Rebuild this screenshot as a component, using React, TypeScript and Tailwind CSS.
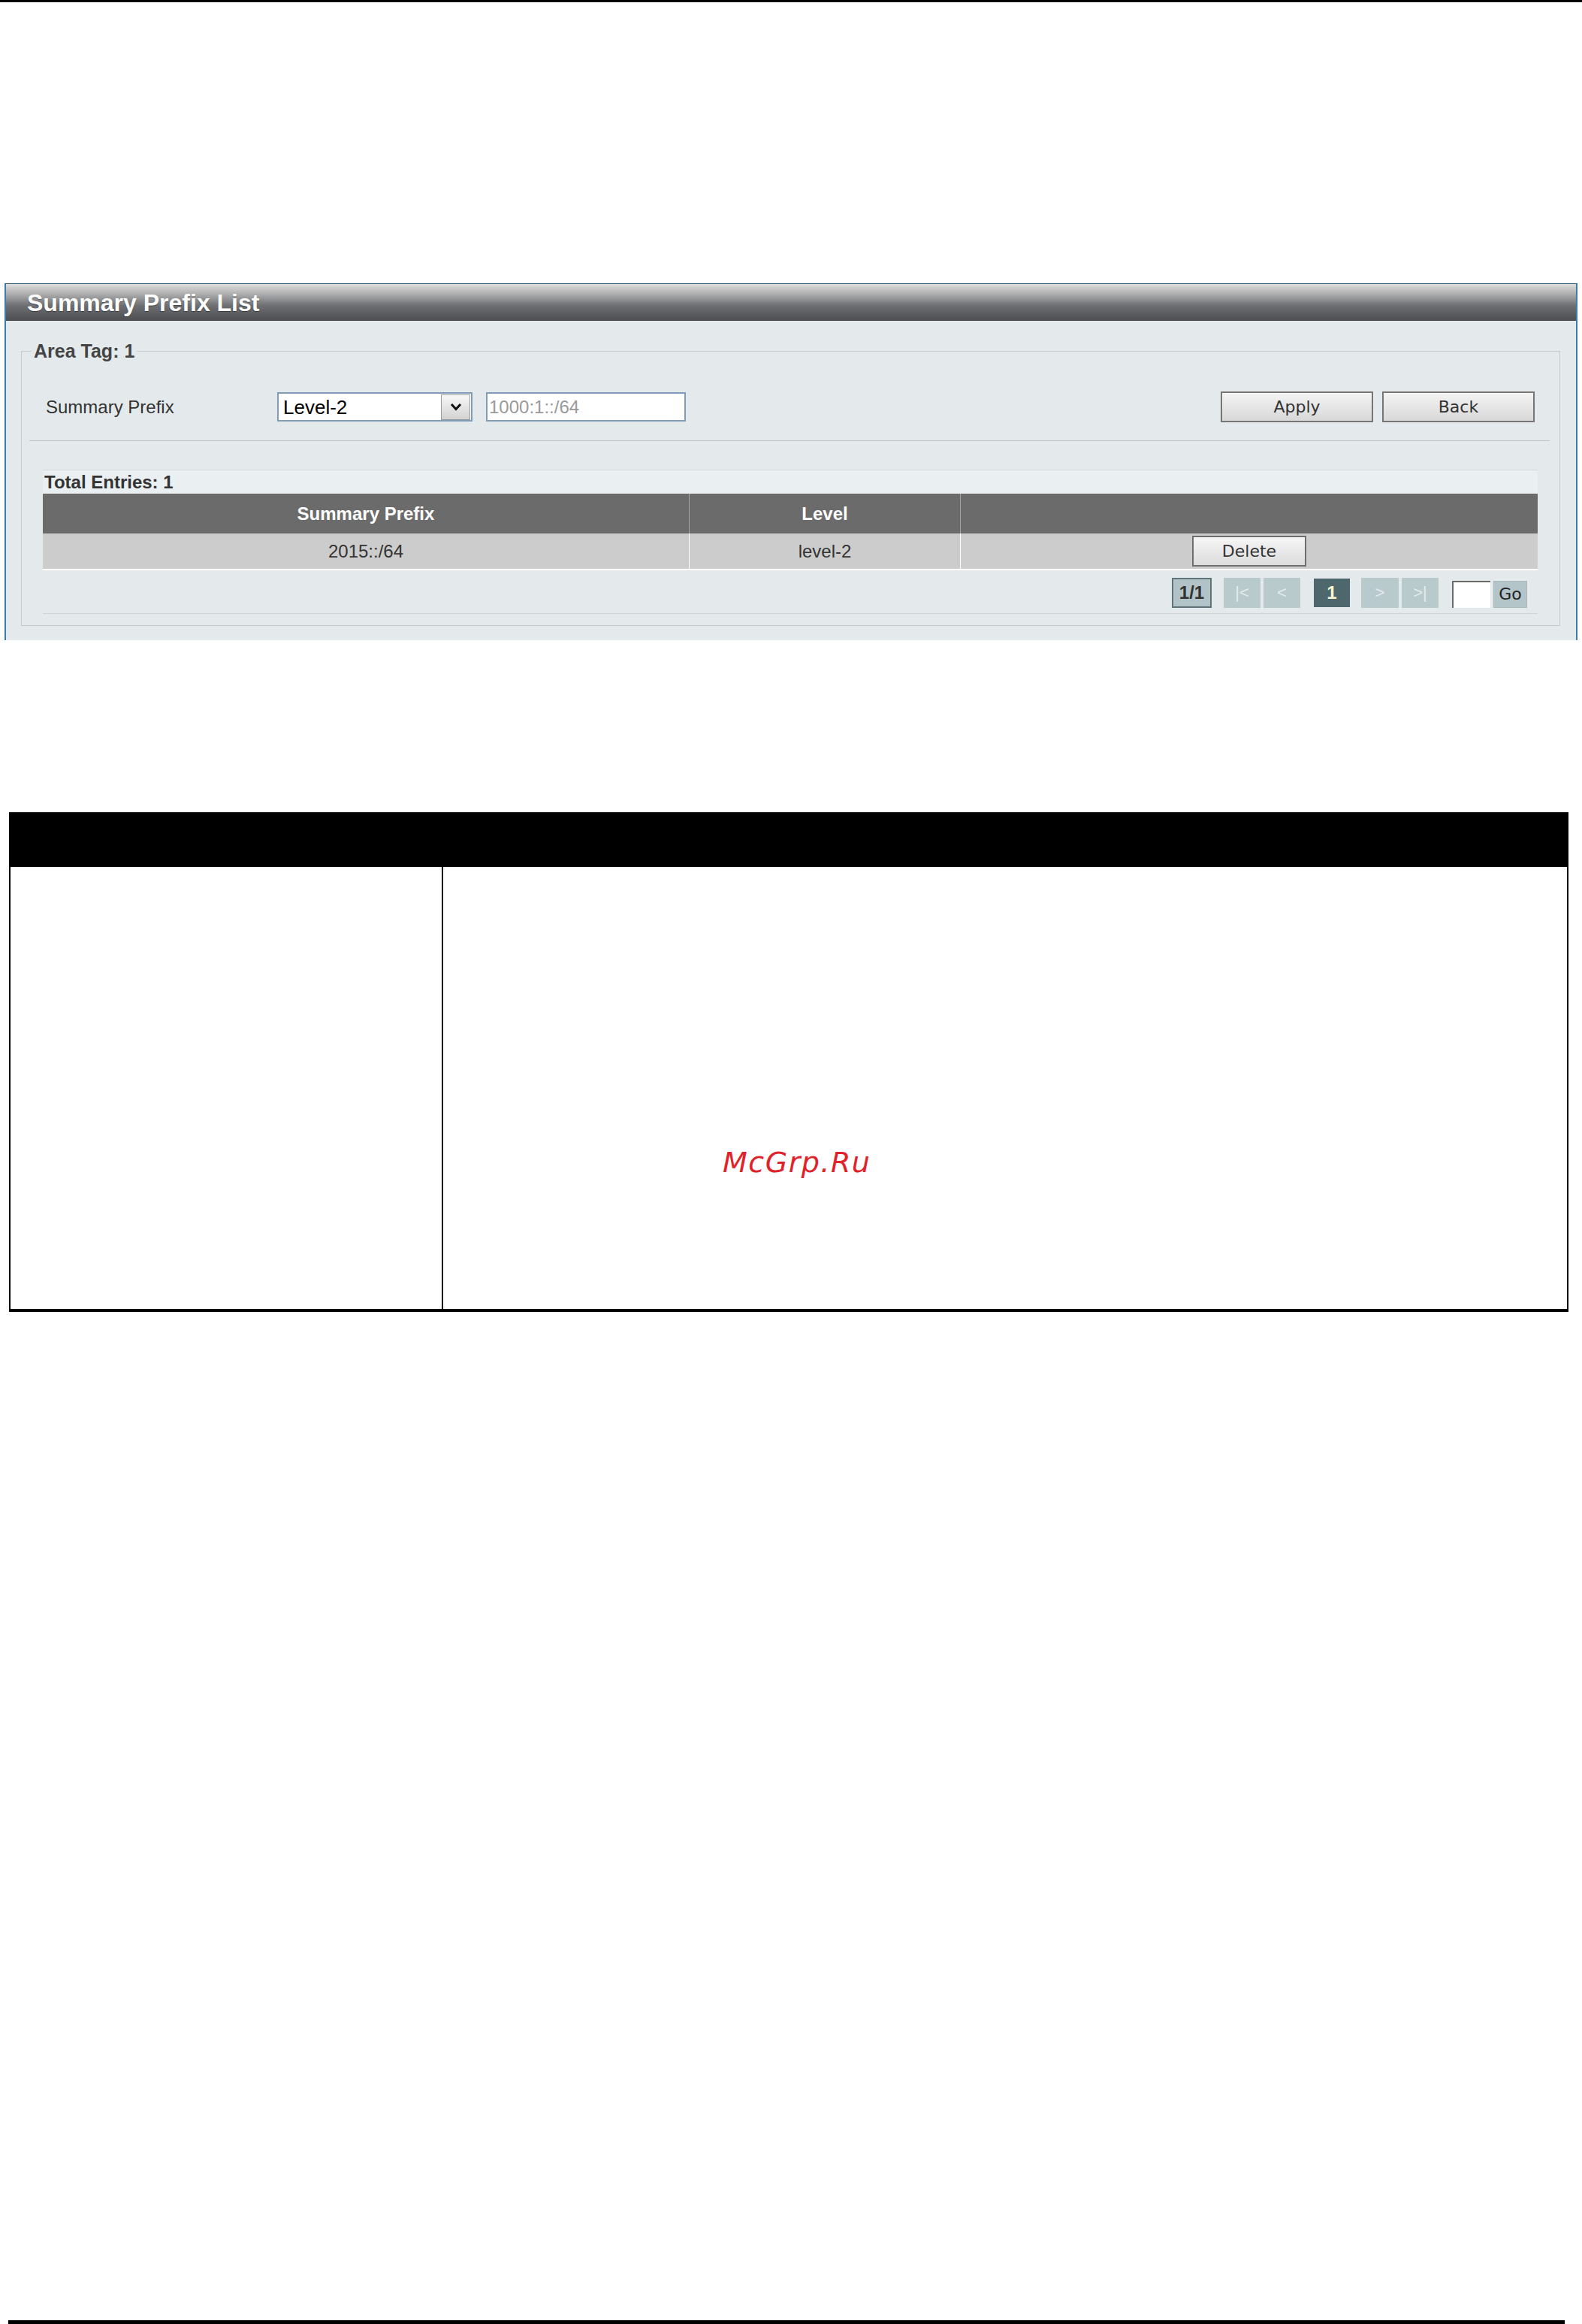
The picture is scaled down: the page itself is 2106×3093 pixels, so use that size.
export default function App() {
  const sans = "font-['Liberation_Sans',Arial,sans-serif]";
  const deja = "font-['DejaVu_Sans',Verdana,sans-serif]";
  return (
    <div className={`w-[2106px] h-[3093px] bg-white flex flex-col ${sans} text-[#333]`}>
      <div className="h-[3px] bg-black shrink-0" />

      {/* Panel */}
      <div className="mt-[374px] ml-[6px] w-[2094px] flex flex-col border-x-2 border-x-[#3d7ca8] border-t border-t-[#2f5f7c] bg-[#e4eaec]">
        <div className="h-[49px] flex items-center pl-[28px] bg-[linear-gradient(to_bottom,#dedede_0%,#b8b8b8_22%,#6e7074_58%,#4a4c50_100%)]">
          <span className="text-[32px] font-bold text-white leading-none [text-shadow:0_1px_1px_rgba(0,0,0,0.4)]">
            Summary Prefix List
          </span>
        </div>

        <div className="pt-[40px] pl-[20px] pr-[21px] pb-[19px]">
          <div className="border border-[#c3cbce] flex flex-col pb-[15px]">
            <div className="-mt-[15px] ml-[13px] px-[3px] w-fit bg-[#e4eaec] text-[25px] font-bold text-[#444] leading-[28px]">
              Area Tag: 1
            </div>

            {/* Form row */}
            <div className="mt-[40px] h-[41px] flex items-center pl-[32px] pr-[33px]">
              <div className="w-[308px] text-[24px] text-[#333] leading-none">Summary Prefix</div>
              <div className="w-[260px] h-[39px] border-2 border-[#7f9db9] bg-white flex items-center">
                <span className="pl-[6px] text-[26px] text-black leading-none">Level-2</span>
                <div className="ml-auto mr-[1px] w-[39px] h-[34px] border border-[#9a9a9a] bg-[linear-gradient(to_bottom,#f8f8f8,#d2d2d2)] flex items-center justify-center">
                  <svg width="16" height="11" viewBox="0 0 16 11">
                    <polyline points="2,2 8,8.5 14,2" fill="none" stroke="#111" strokeWidth="3" />
                  </svg>
                </div>
              </div>
              <div className="ml-[18px] w-[266px] h-[39px] border-2 border-[#7f9db9] bg-white flex items-center">
                <span className="pl-[2px] text-[24px] text-[#9a9a9a] leading-none">1000:1::/64</span>
              </div>
              <div className={`ml-auto w-[203px] h-[41px] border-2 border-[#767676] bg-[linear-gradient(to_bottom,#f4f4f4,#d8d8d8)] flex items-center justify-center ${deja} text-[22px] text-[#333]`}>
                Apply
              </div>
              <div className={`ml-[12px] w-[203px] h-[41px] border-2 border-[#767676] bg-[linear-gradient(to_bottom,#f4f4f4,#d8d8d8)] flex items-center justify-center ${deja} text-[22px] text-[#333]`}>
                Back
              </div>
            </div>

            <div className="mt-[24px] h-px bg-[#bfc7ca] ml-[10px] mr-[13px]" />

            {/* Table */}
            <div className="mt-[38px] ml-[28px] mr-[29px] flex flex-col border-b border-[#cdd4d6]">
              <div className="h-[32px] bg-[#eaeff1] border-t border-[#d3dadc] flex items-center pl-[2px] text-[24px] font-bold text-[#333] leading-none">
                Total Entries: 1
              </div>
              <div className="h-[53px] bg-[#6b6b6b] flex text-white font-bold text-[24px] leading-none">
                <div className="w-[860px] flex items-center justify-center">Summary Prefix</div>
                <div className="w-[361px] border-l border-[#a4a4a4] flex items-center justify-center">Level</div>
                <div className="flex-1 border-l border-[#a4a4a4]" />
              </div>
              <div className="h-[47px] bg-[#cccccc] flex text-[24px] text-[#333] leading-none">
                <div className="w-[860px] flex items-center justify-center">2015::/64</div>
                <div className="w-[361px] border-l border-white flex items-center justify-center">level-2</div>
                <div className="flex-1 border-l border-white flex items-center justify-center">
                  <div className={`w-[152px] h-[41px] border-2 border-[#6e6e6e] bg-[linear-gradient(to_bottom,#f6f6f6,#dcdcdc)] flex items-center justify-center ${deja} text-[22px] text-[#333]`}>
                    Delete
                  </div>
                </div>
              </div>
              <div className="h-[59px] border-t-2 border-white bg-[#e4eaec] flex items-start justify-end pt-[10px] pr-[14px]">
                <div className="w-[53px] h-[40px] bg-[#b2c3c7] border-2 border-[#5f7478] flex items-center justify-center text-[24px] font-bold text-[#333] leading-none">
                  1/1
                </div>
                <div className="ml-[16px] w-[49px] h-[40px] bg-[#b9cacd] flex items-center justify-center text-[22px] text-[#e2eaec] leading-none">
                  |&lt;
                </div>
                <div className="ml-[4px] w-[49px] h-[40px] bg-[#b9cacd] flex items-center justify-center text-[22px] text-[#e2eaec] leading-none">
                  &lt;
                </div>
                <div className="ml-[18px] w-[48px] h-[38px] mt-[1px] bg-[#4d676d] flex items-center justify-center text-[24px] font-bold text-[#fbf4d2] leading-none">
                  1
                </div>
                <div className="ml-[15px] w-[50px] h-[40px] bg-[#b9cacd] flex items-center justify-center text-[22px] text-[#e2eaec] leading-none">
                  &gt;
                </div>
                <div className="ml-[4px] w-[49px] h-[40px] bg-[#b9cacd] flex items-center justify-center text-[22px] text-[#e2eaec] leading-none">
                  &gt;|
                </div>
                <div className="ml-[18px] mt-[4px] w-[51px] h-[36px] bg-white border-t-2 border-l-2 border-[#6a6a6a]" />
                <div className={`ml-[4px] mt-[4px] w-[45px] h-[36px] bg-[#b3c5c9] border border-[#a9babd] flex items-center justify-center ${deja} text-[22px] text-[#222] leading-none`}>
                  Go
                </div>
              </div>
            </div>
          </div>
        </div>
      </div>

      {/* Parameter table */}
      <div className="mt-[229px] ml-[12px] w-[2076px] flex flex-col">
        <div className="h-[73px] bg-black" />
        <div className="relative h-[592px] flex border-x-2 border-b-4 border-black">
          <div className="w-[576px] border-r-2 border-black" />
          <div className="flex-1" />
          <div className={`absolute left-[948px] top-[374px] ${deja} italic text-[38px] leading-none tracking-[1.5px] text-[#e0222b]`}>
            McGrp.Ru
          </div>
        </div>
      </div>

      <div className="mt-auto ml-[11px] w-[2072px] h-[5px] bg-black" />
    </div>
  );
}
